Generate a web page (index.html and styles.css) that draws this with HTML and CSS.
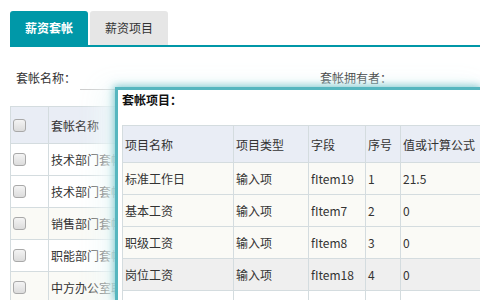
FILE: index.html
```html
<!DOCTYPE html>
<html>
<head>
<meta charset="utf-8">
<link rel="stylesheet" href="styles.css">
</head>
<body>
<div class="page">
  <div class="tabs">
    <div class="tab active">薪资套帐</div>
    <div class="tab">薪资项目</div>
  </div>
  <div class="filters">
    <div class="field name-field"><span class="label">套帐名称：</span><span class="input"></span></div>
    <div class="field owner-field"><span class="label">套帐拥有者：</span></div>
  </div>
  <table class="grid main-grid">
    <tr class="head"><td class="chk"><span class="cb"></span></td><td>套帐名称</td></tr>
    <tr><td class="chk"><span class="cb"></span></td><td>技术部门套帐</td></tr>
    <tr><td class="chk"><span class="cb"></span></td><td>技术部门套帐</td></tr>
    <tr class="alt"><td class="chk"><span class="cb"></span></td><td>销售部门套帐</td></tr>
    <tr><td class="chk"><span class="cb"></span></td><td>职能部门套帐</td></tr>
    <tr class="alt"><td class="chk"><span class="cb"></span></td><td>中方办公室职</td></tr>
  </table>
</div>
<div class="popup">
  <div class="popup-title">套帐项目：</div>
  <table class="grid items">
    <colgroup><col class="c1"><col class="c2"><col class="c3"><col class="c4"><col class="c5"></colgroup>
    <tr class="head"><td>项目名称</td><td>项目类型</td><td>字段</td><td>序号</td><td>值或计算公式</td></tr>
    <tr><td>标准工作日</td><td>输入项</td><td>fItem19</td><td>1</td><td>21.5</td></tr>
    <tr><td>基本工资</td><td>输入项</td><td>fItem7</td><td>2</td><td>0</td></tr>
    <tr><td>职级工资</td><td>输入项</td><td>fItem8</td><td>3</td><td>0</td></tr>
    <tr class="hover"><td>岗位工资</td><td>输入项</td><td>fItem18</td><td>4</td><td>0</td></tr>
    <tr class="blank"><td></td><td></td><td></td><td></td><td></td></tr>
  </table>
</div>
</body>
</html>
```

FILE: styles.css
```css
html, body {
  margin: 0;
  padding: 0;
  background: #fff;
  overflow: hidden;
  width: 480px;
  height: 300px;
}
body {
  font-family: "Noto Sans CJK SC", "Noto Sans", sans-serif;
  font-size: 12px;
  color: #333;
  position: relative;
}
.page {
  padding: 11px 0 0 10px;
}
.tabs {
  display: flex;
  gap: 2px;
  height: 34px;
  border-bottom: 2px solid #0097a7;
}
.tab {
  width: 78px;
  height: 34px;
  line-height: 34px;
  text-align: center;
  background: #e6e6e6;
  color: #333;
  font-size: 12px;
  border-radius: 3px 3px 0 0;
}
.tab.active {
  background: #0098a8;
  color: #fff;
  font-weight: bold;
}
.filters {
  display: flex;
  height: 59px;
  align-items: flex-start;
}
.field {
  display: flex;
  align-items: flex-start;
  padding-top: 22px;
}
.name-field {
  padding-left: 6px;
  width: 304px;
}
.owner-field {
  color: #222;
}
.label {
  line-height: 18px;
}
.input {
  display: block;
  width: 160px;
  height: 20px;
  margin-left: 4px;
  border-bottom: 1px solid #ccc;
}
.grid {
  border-collapse: collapse;
}
.grid td {
  border: 1px solid #d4dcdf;
  padding: 0 0 0 2px;
  height: 31px;
  white-space: nowrap;
  overflow: hidden;
  vertical-align: middle;
}
.grid tr.head td {
  background: #e9edf5;
  height: 36px;
}
.main-grid {
  width: 470px;
}
.main-grid tr.alt td {
  background: #fafaf6;
}
.main-grid td.chk {
  width: 35px;
  padding-left: 2px;
}
.cb {
  display: block;
  width: 11px;
  height: 11px;
  border: 1px solid #a9a9a9;
  border-radius: 3px;
  background: linear-gradient(#f4f4f4, #dcdcdc);
}
.popup {
  position: absolute;
  left: 115px;
  top: 87px;
  width: 365px;
  height: 213px;
  background: #fff;
  border-left: 3px solid #56b6bf;
  border-top: 3px solid #56b6bf;
  box-shadow: 0 0 8px 1px rgba(70, 175, 185, 0.7), -8px 4px 24px 6px rgba(240, 250, 250, 0.95);
  padding: 0 0 0 4px;
  box-sizing: border-box;
  overflow: hidden;
}
.popup-title {
  font-weight: bold;
  color: #111;
  height: 35px;
  line-height: 20px;
}
.items {
  table-layout: fixed;
  width: 358px;
}
.items col.c1 { width: 111px; }
.items col.c2 { width: 75px; }
.items col.c3 { width: 57px; }
.items col.c4 { width: 35px; }
.items col.c5 { width: 80px; }
.items td:last-child {
  border-right: none;
}
.items tr td {
  background: #fafaf6;
}
.items tr.head td {
  background: #e9edf5;
  height: 36px;
}
.items tr.hover td {
  background: #efefef;
}
.items tr.blank td {
  background: #fff;
}
```
